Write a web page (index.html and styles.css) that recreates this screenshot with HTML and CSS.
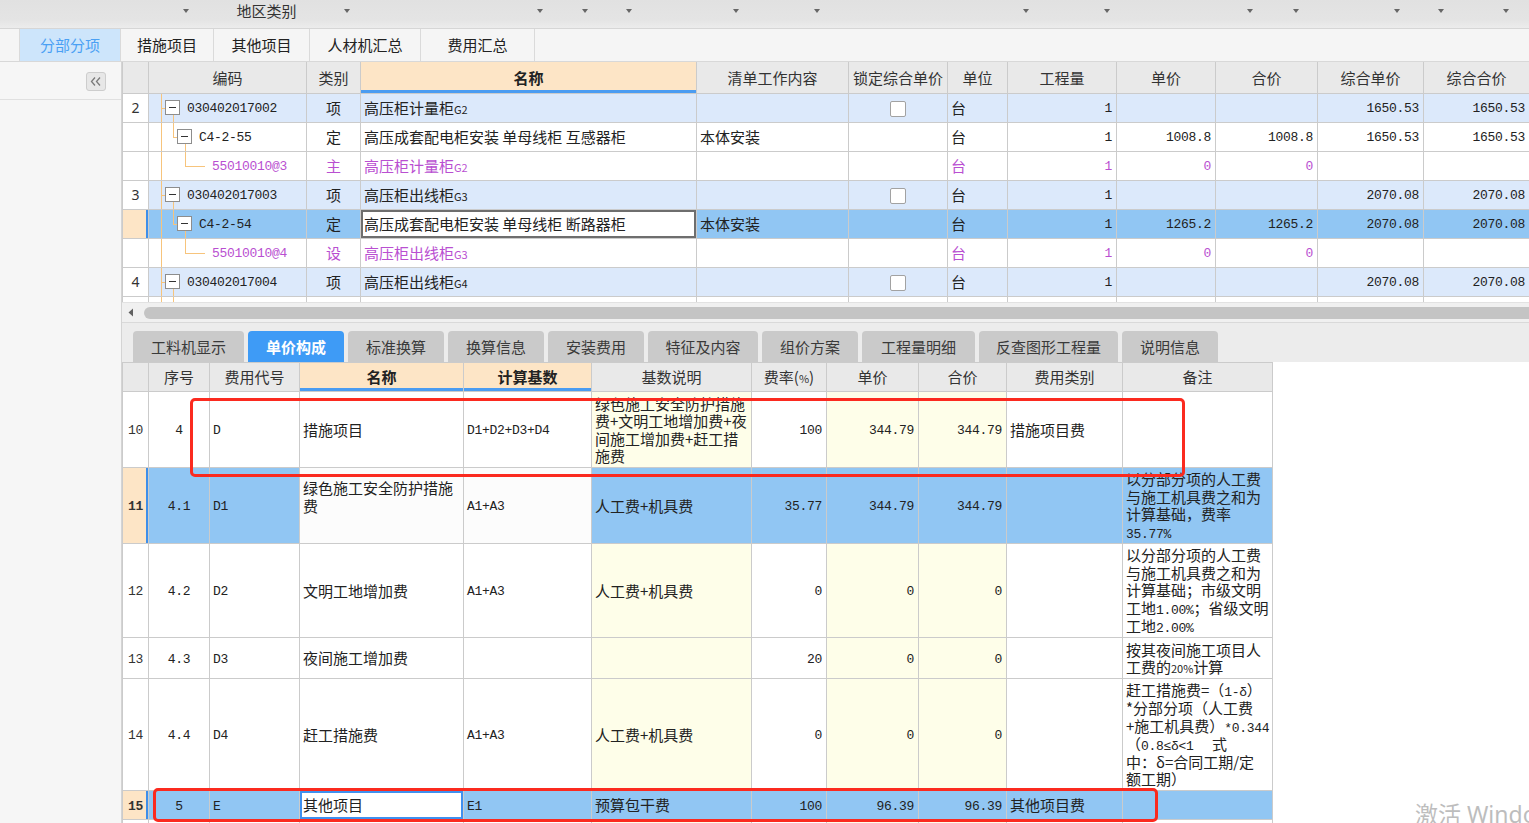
FILE: index.html
```html
<!DOCTYPE html>
<html lang="zh-CN">
<head>
<meta charset="utf-8">
<title>单价构成</title>
<link rel="stylesheet" href="styles.css">
</head>
<body>
<header class="topbar">
  <div class="fc"><i class="dd"></i></div>
  <div class="fc"><span class="flabel">地区类别</span><i class="dd"></i></div>
  <div class="fc"><i class="dd"></i></div>
  <div class="fc"><i class="dd"></i></div>
  <div class="fc"><i class="dd"></i></div>
  <div class="fc"><i class="dd"></i></div>
  <div class="fc"><i class="dd"></i></div>
  <div class="fc"><i class="dd"></i></div>
  <div class="fc"><i class="dd"></i></div>
  <div class="fc"><i class="dd"></i></div>
  <div class="fc"><i class="dd"></i></div>
  <div class="fc"><i class="dd"></i></div>
  <div class="fc"><i class="dd"></i></div>
  <div class="fc"><i class="dd"></i></div>
</header>

<nav class="tabs">
  <div class="tab t1 active">分部分项</div>
  <div class="tab t2">措施项目</div>
  <div class="tab t3">其他项目</div>
  <div class="tab t4">人材机汇总</div>
  <div class="tab t5">费用汇总</div>
</nav>

<div class="main">
  <aside class="sidebar">
    <div class="side-head">
      <button class="collapse" type="button" aria-label="收起">
        <svg width="18" height="17" viewBox="0 0 18 17"><polyline points="8,4.5 4.5,8.5 8,12.5" fill="none" stroke="#7a7a7a" stroke-width="1.3"/><polyline points="13,4.5 9.5,8.5 13,12.5" fill="none" stroke="#7a7a7a" stroke-width="1.3"/></svg>
      </button>
    </div>
  </aside>

  <section class="content">
    <div class="upper">
      <table class="grid tg">
        <colgroup>
          <col class="w26"><col class="w158"><col class="w54"><col class="w336"><col class="w152"><col class="w99"><col class="w60"><col class="w109"><col class="w99"><col class="w102"><col class="w106"><col class="w106">
        </colgroup>
        <thead>
          <tr class="hrow">
            <th></th><th>编码</th><th>类别</th><th class="hl">名称</th><th>清单工作内容</th><th>锁定综合单价</th><th>单位</th><th>工程量</th><th>单价</th><th>合价</th><th>综合单价</th><th>综合合价</th>
          </tr>
        </thead>
        <tbody>
          <tr class="xiang">
            <td class="rn">2</td>
            <td class="code l1"><div class="tree"><span class="tbox"></span><span class="mono">030402017002</span></div></td>
            <td class="c">项</td>
            <td>高压柜计量柜<span class="sm">G2</span></td>
            <td></td>
            <td class="c"><span class="chk"></span></td>
            <td>台</td>
            <td class="n">1</td>
            <td class="n"></td>
            <td class="n"></td>
            <td class="n">1650.53</td>
            <td class="n">1650.53</td>
          </tr>
          <tr class="ding">
            <td class="rn"></td>
            <td class="code l2"><div class="tree"><span class="tbox"></span><span class="mono">C4-2-55</span></div></td>
            <td class="c">定</td>
            <td>高压成套配电柜安装 单母线柜 互感器柜</td>
            <td>本体安装</td>
            <td></td>
            <td>台</td>
            <td class="n">1</td>
            <td class="n">1008.8</td>
            <td class="n">1008.8</td>
            <td class="n">1650.53</td>
            <td class="n">1650.53</td>
          </tr>
          <tr class="pur">
            <td class="rn"></td>
            <td class="code l3"><div class="tree"><span class="mono">55010010@3</span></div></td>
            <td class="c">主</td>
            <td>高压柜计量柜<span class="sm">G2</span></td>
            <td></td>
            <td></td>
            <td>台</td>
            <td class="n">1</td>
            <td class="n">0</td>
            <td class="n">0</td>
            <td class="n"></td>
            <td class="n"></td>
          </tr>
          <tr class="xiang">
            <td class="rn">3</td>
            <td class="code l1"><div class="tree"><span class="tbox"></span><span class="mono">030402017003</span></div></td>
            <td class="c">项</td>
            <td>高压柜出线柜<span class="sm">G3</span></td>
            <td></td>
            <td class="c"><span class="chk"></span></td>
            <td>台</td>
            <td class="n">1</td>
            <td class="n"></td>
            <td class="n"></td>
            <td class="n">2070.08</td>
            <td class="n">2070.08</td>
          </tr>
          <tr class="sel">
            <td class="rn cur"></td>
            <td class="code l2"><div class="tree"><span class="tbox"></span><span class="mono">C4-2-54</span></div></td>
            <td class="c">定</td>
            <td class="edit">高压成套配电柜安装 单母线柜 断路器柜</td>
            <td>本体安装</td>
            <td></td>
            <td>台</td>
            <td class="n">1</td>
            <td class="n">1265.2</td>
            <td class="n">1265.2</td>
            <td class="n">2070.08</td>
            <td class="n">2070.08</td>
          </tr>
          <tr class="pur">
            <td class="rn"></td>
            <td class="code l3"><div class="tree"><span class="mono">55010010@4</span></div></td>
            <td class="c">设</td>
            <td>高压柜出线柜<span class="sm">G3</span></td>
            <td></td>
            <td></td>
            <td>台</td>
            <td class="n">1</td>
            <td class="n">0</td>
            <td class="n">0</td>
            <td class="n"></td>
            <td class="n"></td>
          </tr>
          <tr class="xiang">
            <td class="rn">4</td>
            <td class="code l1"><div class="tree"><span class="tbox"></span><span class="mono">030402017004</span></div></td>
            <td class="c">项</td>
            <td>高压柜出线柜<span class="sm">G4</span></td>
            <td></td>
            <td class="c"><span class="chk"></span></td>
            <td>台</td>
            <td class="n">1</td>
            <td class="n"></td>
            <td class="n"></td>
            <td class="n">2070.08</td>
            <td class="n">2070.08</td>
          </tr>
          <tr class="ding">
            <td class="rn"></td>
            <td class="code l2"><div class="tree"><span class="tbox"></span><span class="mono">C4-2-54</span></div></td>
            <td class="c">定</td>
            <td>高压成套配电柜安装 单母线柜 断路器柜</td>
            <td>本体安装</td>
            <td></td>
            <td>台</td>
            <td class="n">1</td>
            <td class="n">1265.2</td>
            <td class="n">1265.2</td>
            <td class="n">2070.08</td>
            <td class="n">2070.08</td>
          </tr>
        </tbody>
      </table>
    </div>

    <div class="hscroll">
      <svg class="sarrow" width="6" height="9" viewBox="0 0 6 9"><polygon points="5,0.5 5,8.5 0.5,4.5" fill="#606060"/></svg>
      <div class="thumb"></div>
    </div>

    <div class="btabs">
      <div class="btab b1">工料机显示</div>
      <div class="btab b2 active">单价构成</div>
      <div class="btab b3">标准换算</div>
      <div class="btab b4">换算信息</div>
      <div class="btab b5">安装费用</div>
      <div class="btab b6">特征及内容</div>
      <div class="btab b7">组价方案</div>
      <div class="btab b8">工程量明细</div>
      <div class="btab b9">反查图形工程量</div>
      <div class="btab b10">说明信息</div>
    </div>

    <div class="lower">
      <table class="grid bg">
        <colgroup>
          <col class="w26"><col class="w61"><col class="w90"><col class="w164"><col class="w128"><col class="w160"><col class="w75"><col class="w92"><col class="w88"><col class="w116"><col class="w150">
        </colgroup>
        <thead>
          <tr class="hrow2">
            <th></th><th>序号</th><th>费用代号</th><th class="hl">名称</th><th class="hl">计算基数</th><th>基数说明</th><th>费率(<span class="pct">%</span>)</th><th>单价</th><th>合价</th><th>费用类别</th><th>备注</th>
          </tr>
        </thead>
        <tbody>
          <tr class="r76">
            <td class="rn mono">10</td>
            <td class="c mono">4</td>
            <td class="mono">D</td>
            <td>措施项目</td>
            <td class="mono">D1+D2+D3+D4</td>
            <td class="y nw">绿色施工安全防护措施<br>费+文明工地增加费+夜<br>间施工增加费+赶工措<br>施费</td>
            <td class="n mono">100</td>
            <td class="n mono y">344.79</td>
            <td class="n mono y">344.79</td>
            <td>措施项目费</td>
            <td></td>
          </tr>
          <tr class="r76 sel">
            <td class="rn cur mono">11</td>
            <td class="c mono">4.1</td>
            <td class="mono">D1</td>
            <td class="w vt nw">绿色施工安全防护措施<br>费</td>
            <td class="w mono">A1+A3</td>
            <td>人工费+机具费</td>
            <td class="n mono">35.77</td>
            <td class="n mono">344.79</td>
            <td class="n mono">344.79</td>
            <td></td>
            <td class="nw">以分部分项的人工费<br>与施工机具费之和为<br>计算基础，费率<br><span class="mono">35.77%</span></td>
          </tr>
          <tr class="r94">
            <td class="rn mono">12</td>
            <td class="c mono">4.2</td>
            <td class="mono">D2</td>
            <td>文明工地增加费</td>
            <td class="mono">A1+A3</td>
            <td class="y">人工费+机具费</td>
            <td class="n mono">0</td>
            <td class="n mono y">0</td>
            <td class="n mono y">0</td>
            <td></td>
            <td class="nw">以分部分项的人工费<br>与施工机具费之和为<br>计算基础；市级文明<br>工地<span class="mono">1.00%</span>；省级文明<br>工地<span class="mono">2.00%</span></td>
          </tr>
          <tr class="r41">
            <td class="rn mono">13</td>
            <td class="c mono">4.3</td>
            <td class="mono">D3</td>
            <td>夜间施工增加费</td>
            <td class="mono"></td>
            <td class="y"></td>
            <td class="n mono">20</td>
            <td class="n mono y">0</td>
            <td class="n mono y">0</td>
            <td></td>
            <td class="nw">按其夜间施工项目人<br>工费的<span class="sm">20%</span>计算</td>
          </tr>
          <tr class="r112">
            <td class="rn mono">14</td>
            <td class="c mono">4.4</td>
            <td class="mono">D4</td>
            <td>赶工措施费</td>
            <td class="mono">A1+A3</td>
            <td class="y">人工费+机具费</td>
            <td class="n mono">0</td>
            <td class="n mono y">0</td>
            <td class="n mono y">0</td>
            <td></td>
            <td class="nw">赶工措施费=（<span class="mono">1-δ</span>）<br>*分部分项（人工费<br>+施工机具费）<span class="mono">*0.344</span><br>（<span class="mono">0.8≤δ&lt;1</span>　 式<br>中：δ=合同工期/定<br>额工期）</td>
          </tr>
          <tr class="r29 sel">
            <td class="rn cur mono">15</td>
            <td class="c mono">5</td>
            <td class="mono">E</td>
            <td class="bedit">其他项目</td>
            <td class="mono">E1</td>
            <td>预算包干费</td>
            <td class="n mono">100</td>
            <td class="n mono">96.39</td>
            <td class="n mono">96.39</td>
            <td>其他项目费</td>
            <td></td>
          </tr>
          <tr class="r29">
            <td class="rn mono">16</td>
            <td></td><td></td><td></td><td></td>
            <td class="y"></td>
            <td></td>
            <td class="y"></td>
            <td class="y"></td>
            <td></td><td></td>
          </tr>
        </tbody>
      </table>
    </div>
  </section>
</div>

<div class="mark box1"></div>
<div class="mark box2"></div>
<div class="watermark">激活 Windows</div>
</body>
</html>
```
FILE: styles.css
```css
* { box-sizing: border-box; margin: 0; padding: 0; }
html, body { width: 1529px; height: 823px; overflow: hidden; }
body {
  font-family: "Noto Sans CJK SC", "Noto Sans", sans-serif;
  font-size: 15px;
  color: #222;
  background: #fff;
  position: relative;
}

/* top filter bar */
.topbar {
  height: 29px;
  display: grid;
  grid-template-columns: 189px 161px 193px 45px 44px 107px 81px 209px 81px 143px 46px 101px 44px 65px;
  grid-template-rows: 22px;
  background: linear-gradient(#e1e1e1, #e4e4e4 70%, #ececec);
  border-bottom: 1px solid #d6d6d6;
}
.fc { display: flex; align-items: center; justify-content: flex-end; }
.flabel { flex: 1; text-align: center; color: #333; font-size: 15px; line-height: 22px; }
.dd {
  width: 0; height: 0;
  border-left: 3.5px solid transparent;
  border-right: 3.5px solid transparent;
  border-top: 4px solid #666;
}

/* module tabs */
.tabs {
  height: 33px;
  display: flex;
  padding-left: 19px;
  background: #f5f5f5;
  border-bottom: 1px solid #d8d8d8;
}
.tab {
  border-left: 1px solid #dadada;
  text-align: center;
  line-height: 32px;
  color: #222;
}
.tab.t5 { border-right: 1px solid #dadada; }
.t1 { width: 101px; }
.t2 { width: 93px; }
.t3 { width: 96px; }
.t4 { width: 111px; }
.t5 { width: 115px; }
.tab.active { background: #cde5fb; color: #4aa0f4; }

/* main */
.main { display: flex; height: 761px; }
.sidebar {
  width: 122px;
  background: #f6f6f6;
  border-right: 1px solid #d4d4d4;
}
.side-head {
  height: 38px;
  border-bottom: 1px solid #e0e0e0;
  display: flex;
  justify-content: flex-end;
  align-items: flex-start;
  padding: 10px 15px 0 0;
}
.collapse {
  width: 20px; height: 19px;
  border: 1px solid #cdcdcd;
  border-radius: 3px;
  background: #e7e7e7;
  display: flex; align-items: center; justify-content: center;
}

.content {
  flex: 1;
  display: flex;
  flex-direction: column;
  background: #ededed;
  overflow: hidden;
}

/* grids */
.grid {
  border-collapse: collapse;
  table-layout: fixed;
}
.grid th, .grid td {
  border: 1px solid #cbcbcb;
  white-space: nowrap;
  overflow: hidden;
  padding: 0 3px;
  text-align: left;
  vertical-align: middle;
  line-height: 17.5px;
}
.grid th {
  background: #e9e9e9;
  font-weight: normal;
  text-align: center;
  color: #333;
}
.grid th.hl {
  background: #fde5c6;
  font-weight: bold;
  color: #222;
  box-shadow: inset 0 -3px 0 #4b9cf1;
}
.grid .c { text-align: center; }
.grid .n { text-align: right; padding-right: 4px; }
.mono { font-family: "Liberation Mono", monospace; font-size: 13px; letter-spacing: -0.3px; }
.sm { font-size: 11px; }
.pct { font-size: 11px; }
.grid td span.mono, .grid td span.sm, .grid th span.pct { line-height: 1; }
.grid td.mono, .tg td.n { padding-top: 3px; }
.tree .mono { position: relative; top: 1px; }

.w26 { width: 26px; } .w158 { width: 158px; } .w54 { width: 54px; } .w336 { width: 336px; }
.w152 { width: 152px; } .w99 { width: 99px; } .w60 { width: 60px; } .w109 { width: 109px; }
.w102 { width: 102px; } .w106 { width: 106px; } .w61 { width: 61px; } .w90 { width: 90px; }
.w164 { width: 164px; } .w128 { width: 128px; } .w160 { width: 160px; } .w75 { width: 75px; }
.w92 { width: 92px; } .w88 { width: 88px; } .w116 { width: 116px; } .w150 { width: 150px; }

/* upper grid */
.upper { height: 240px; overflow: hidden; background: #fff; }
.tg { width: 1407px; }
.tg .hrow th { height: 31px; border-top: none; }
.tg tbody tr { height: 29px; }
.tg td { background: #fff; }
.tg td.rn { text-align: center; font-family: "Noto Sans", sans-serif; font-size: 14px; color: #333; }
.tg .xiang td { background-color: #dce9fb; }
.tg .xiang td.rn { background-color: #fff; }
.tg .sel td { background-color: #91c6f3; }
.tg .sel td.rn { background-color: #fde5c6; }
.grid td.cur { box-shadow: inset -2px 0 0 #3f8fe9; }
.tg .sel td.edit { background-color: #fff; box-shadow: inset 0 0 0 2px #6e6e6e; }
.tg .pur td { color: #b94fd1; }
.tg .n { font-family: "Liberation Mono", monospace; font-size: 13px; letter-spacing: -0.3px; }

.chk {
  display: inline-block;
  width: 16px; height: 16px;
  border: 1px solid #a2a2a2;
  border-radius: 2px;
  background: #fff;
  vertical-align: middle;
}

/* tree */
.tg td.code {
  padding: 0;
  background-repeat: no-repeat;
}
.tree { display: flex; align-items: center; gap: 7px; height: 28px; }
.l1 .tree { padding-left: 16px; }
.l2 .tree { padding-left: 28px; }
.l3 .tree { padding-left: 63px; }
.tg td.l1 {
  background-image: linear-gradient(#f7c47c, #f7c47c), linear-gradient(#f7c47c, #f7c47c), linear-gradient(#f7c47c, #f7c47c);
  background-size: 1px 100%, 4px 1px, 1px 7px;
  background-position: 12px 0, 12px 14px, 24px 100%;
}
.tg td.l2 {
  background-image: linear-gradient(#f7c47c, #f7c47c), linear-gradient(#f7c47c, #f7c47c), linear-gradient(#f7c47c, #f7c47c), linear-gradient(#f7c47c, #f7c47c);
  background-size: 1px 100%, 1px 15px, 4px 1px, 1px 7px;
  background-position: 12px 0, 24px 0, 24px 14px, 36px 100%;
}
.tg td.l3 {
  background-image: linear-gradient(#f7c47c, #f7c47c), linear-gradient(#f7c47c, #f7c47c), linear-gradient(#f7c47c, #f7c47c);
  background-size: 1px 100%, 1px 15px, 20px 1px;
  background-position: 12px 0, 36px 0, 36px 14px;
}
.tbox {
  flex: none;
  width: 15px; height: 15px;
  border: 1px solid #8d8d8d;
  background: #fff linear-gradient(#333, #333) center / 7px 1px no-repeat;
}

/* scrollbar */
.hscroll {
  height: 20px;
  background: #f0f0f0;
  display: flex;
  align-items: center;
  padding-left: 6px;
  border-top: 1px solid #e2e2e2;
}
.sarrow { flex: none; }
.thumb {
  flex: 1;
  height: 12px;
  margin-left: 10px;
  border-radius: 6px 0 0 6px;
  background: #c4c4c4;
}

/* lower tabs */
.btabs {
  height: 40px;
  display: flex;
  gap: 4px;
  padding: 8px 0 0 11px;
  background: #ececec;
  border-top: 1px solid #d9d9d9;
}
.btab {
  height: 32px;
  line-height: 32px;
  text-align: center;
  background: #cacaca;
  color: #3a3a3a;
  border-radius: 4px 4px 0 0;
}
.btab.active { background: #3e9bf6; color: #fff; font-weight: bold; }
.b1 { width: 111px; } .b2 { width: 96px; } .b3 { width: 96px; } .b4 { width: 96px; }
.b5 { width: 96px; } .b6 { width: 110px; } .b7 { width: 96px; } .b8 { width: 113px; }
.b9 { width: 139px; } .b10 { width: 96px; }

/* lower grid */
.lower { flex: 1; background: #fff; overflow: hidden; }
.bg { width: 1150px; }
.bg .hrow2 th { height: 29px; }
.bg td { background: #fff; }
.bg td.y { background-color: #fefee9; }
.bg td.rn { text-align: center; color: #333; }
.bg td.nw { white-space: nowrap; }
.bg td.vt { vertical-align: top; padding-top: 11px; }
.bg .sel td { background-color: #91c6f3; }
.bg .sel td.rn { background-color: #fde5c6; font-weight: bold; }
.bg .sel td.w { background-color: #fcfcfc; }
.bg .sel td.bedit { background-color: #fff; box-shadow: inset 0 0 0 2px #3f90ef; }
.r76 { height: 76px; }
.r94 { height: 94px; }
.r41 { height: 41px; }
.r112 { height: 112px; }
.r29 { height: 29px; }

/* annotations */
.mark {
  position: absolute;
  border: 3px solid #fb2a1f;
  border-radius: 5px;
}
.box1 { left: 190px; top: 398px; width: 995px; height: 79px; }
.box2 { left: 153px; top: 788px; width: 1005px; height: 34px; }
.watermark {
  position: absolute;
  left: 1415px;
  top: 801px;
  font-size: 23px;
  line-height: 26px;
  color: #bdbdbd;
  white-space: nowrap;
  font-family: "Noto Sans", "Noto Sans CJK SC", sans-serif;
}
```
